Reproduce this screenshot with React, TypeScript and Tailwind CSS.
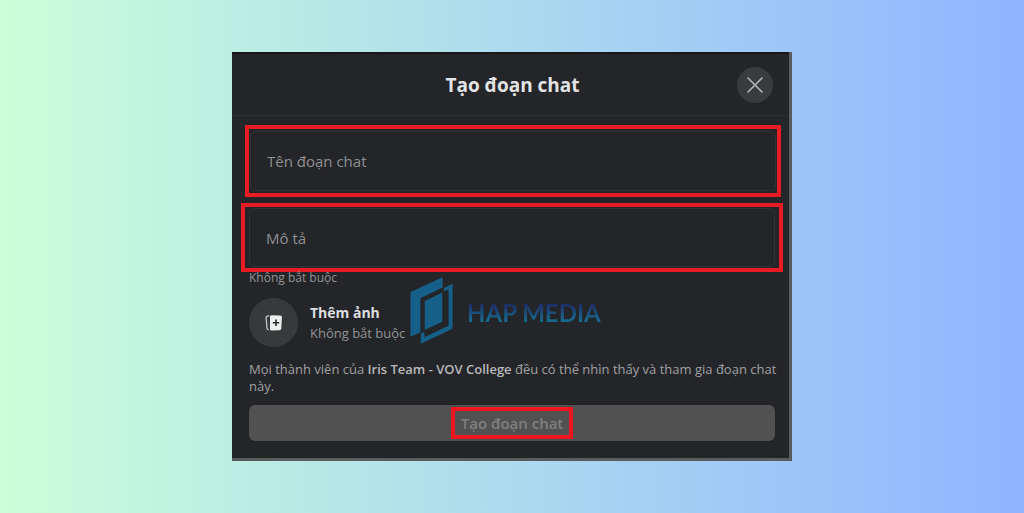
import React from 'react';

function CloseIcon() {
  return (
    <svg viewBox="0 0 16 16" className="size-4" fill="none" stroke="currentColor" strokeWidth="1.6" strokeLinecap="round" aria-hidden="true">
      <path d="M1 1 15 15M15 1 1 15" />
    </svg>
  );
}

function AddPhotoIcon() {
  return (
    <svg viewBox="0 0 18 18" className="size-[18px]" fill="none" aria-hidden="true">
      <path d="M4 1.8 1.8 2.3Q1 2.6 1.1 3.5L2 14.2Q2.1 15.3 3.4 15.6" stroke="#c4c6c9" strokeWidth="1.3" strokeLinecap="round" />
      <path d="M6.6 1.2 15.2 1.5Q17 1.6 16.9 3.2L16.3 14.6Q16.2 16.2 14.6 16.2L6.5 16.5Q5 16.5 5 15V2.8Q5 1.2 6.6 1.2Z" fill="#eceded" />
      <path d="M11 5.6V12M7.8 8.8H14.2" stroke="#2a2b2d" strokeWidth="1.6" />
    </svg>
  );
}

function Watermark() {
  return (
    <div className="pointer-events-none absolute top-[225px] left-[178px] flex items-center gap-3.5">
      <svg viewBox="33 20 129 202" className="h-[67px] w-[43px]" fill="#155f88" aria-hidden="true">
        <path d="M34 65 131 21V52L64 84V187L34 200Z" />
        <path d="M77 92 130 67V155L77 180Z" />
        <path d="M135 53 161 40V176L65 221V191L76 185V202L149 167V57L135 64Z" />
      </svg>
      <span className="bg-linear-to-b from-[#1c2c66] from-30% to-[#17688c] to-75% bg-clip-text pt-1 font-['Lato',sans-serif] text-2xl leading-8 font-bold whitespace-nowrap text-transparent">
        HAP MEDIA
      </span>
    </div>
  );
}

const field =
  'block w-full rounded-md border border-[#2f3536] bg-[#242528] px-4 text-[15px] text-[#b4b5b7] outline-none placeholder:text-[#8f9092]';

export default function App() {
  return (
    <main className="flex min-h-screen items-center justify-center bg-linear-to-r from-[#cbffd8] to-[#90b4ff] font-['Open_Sans','Noto_Sans',sans-serif]">
      <section className="relative w-full max-w-[560px] border-r-3 border-b-3 border-[#5b5c5e] bg-[#242528]" aria-labelledby="dialog-title">
        <header className="grid h-16 grid-cols-[36px_1fr_36px] items-center border-t-2 border-b border-t-[#17181a] border-b-[#2b2d2f] pr-4 pl-5">
          <h1 id="dialog-title" className="col-start-2 text-center text-[19px] leading-6 font-bold text-[#e2e3e5]">
            Tạo đoạn chat
          </h1>
          <button type="button" aria-label="Đóng" className="flex size-9 items-center justify-center rounded-full bg-[#3a3b3d] text-[#b4b5b8]">
            <CloseIcon />
          </button>
        </header>

        <form className="pt-[9px] pr-1.5 pb-[17px] pl-[9px]">
          <div className="mr-0.5 ml-1 border-4 border-[#e81c23] px-px py-0.5">
            <input aria-label="Tên đoạn chat" placeholder="Tên đoạn chat" className={`${field} h-[60px]`} />
          </div>
          <div className="mt-1.5 border-4 border-[#e81c23] px-1 py-px">
            <input aria-label="Mô tả" placeholder="Mô tả" aria-describedby="description-help" className={`${field} h-[59px]`} />
          </div>

          <div className="px-2">
            <p id="description-help" className="text-xs leading-3 text-[#929396]">Không bắt buộc</p>

            <div className="mt-3.5 flex items-center gap-3">
              <button type="button" aria-label="Thêm ảnh" className="flex size-[49px] items-center justify-center rounded-full bg-[#38393b]">
                <AddPhotoIcon />
              </button>
              <div>
                <p className="text-sm leading-5 font-bold text-[#dddee0]">Thêm ảnh</p>
                <p className="text-[13px] leading-5 text-[#929396]">Không bắt buộc</p>
              </div>
            </div>

            <p className="mt-3.5 -mr-2 text-[13px] leading-[17px] text-[#a0a1a3]">
              Mọi thành viên của <strong className="font-semibold text-[#b8b9bb]">Iris Team - VOV College</strong> đều có thể nhìn thấy và tham gia đoạn chat này.
            </p>

            <button type="button" className="mt-2.5 flex h-9 w-full items-center justify-center rounded-md bg-[#515151] text-[15px] leading-6 font-semibold text-[#808080]">
              <span className="border-4 border-[#ef1620] px-1.5">Tạo đoạn chat</span>
            </button>
          </div>
        </form>

        <Watermark />
      </section>
    </main>
  );
}
